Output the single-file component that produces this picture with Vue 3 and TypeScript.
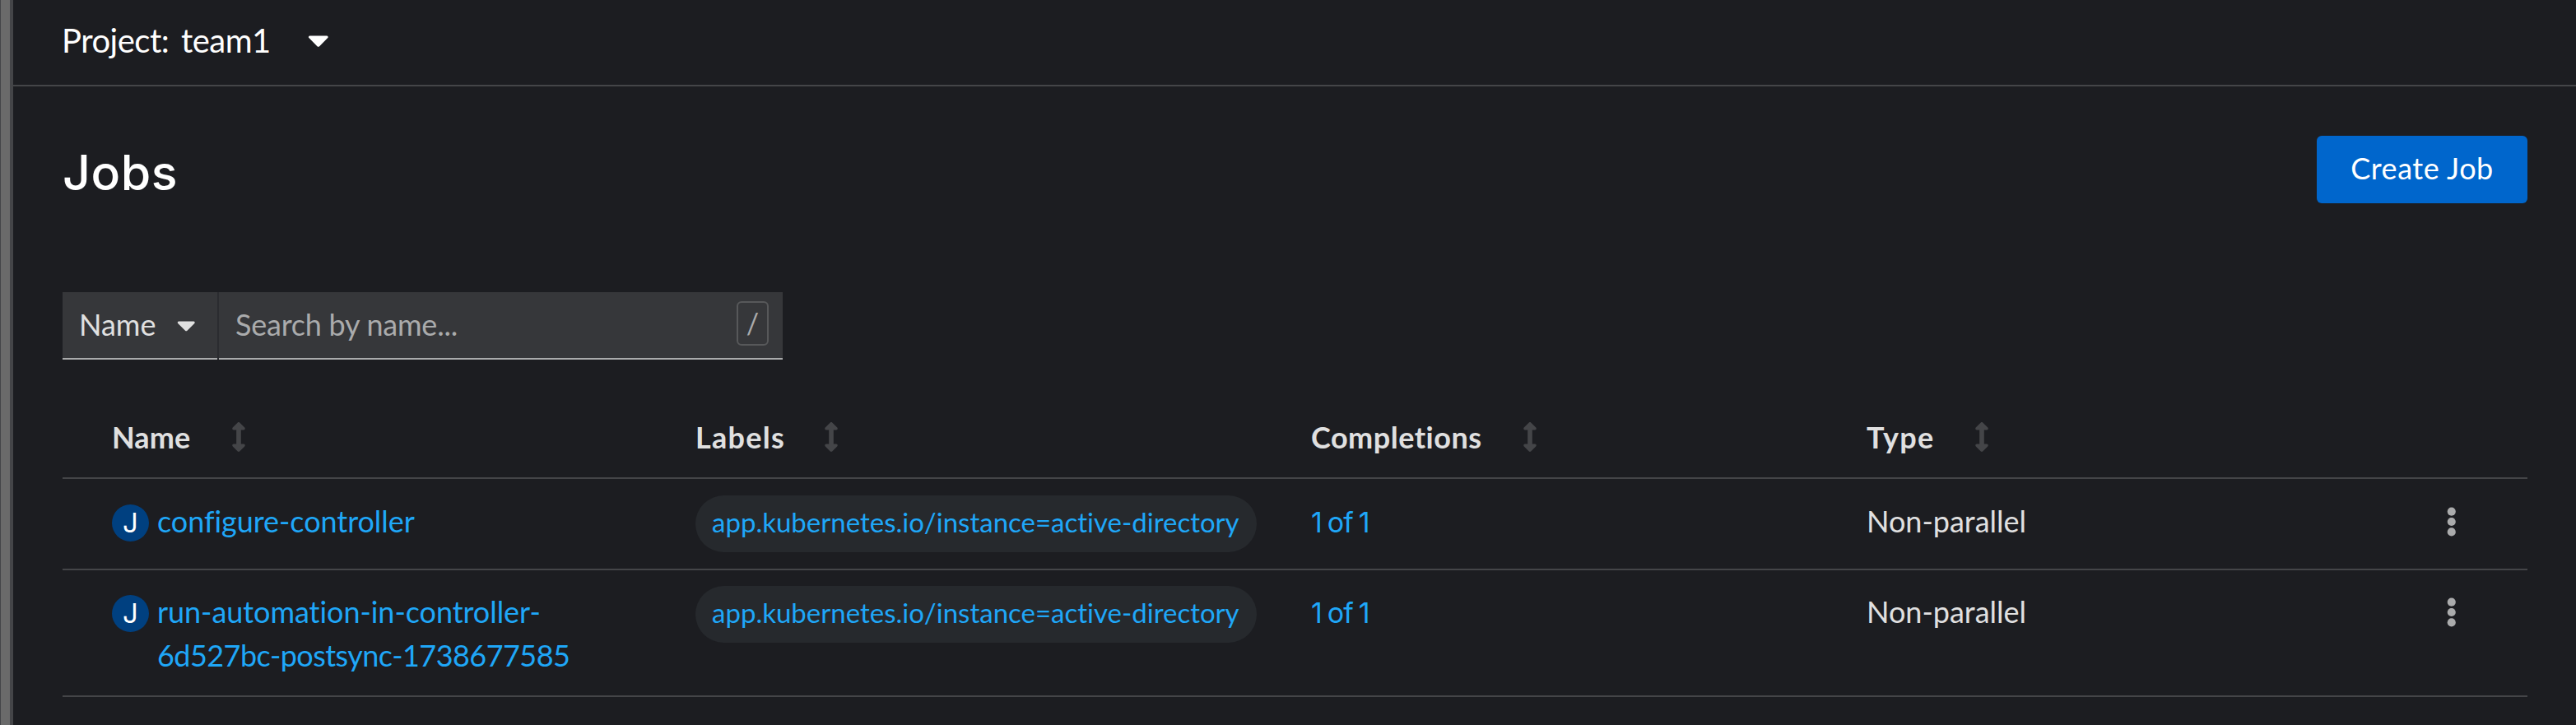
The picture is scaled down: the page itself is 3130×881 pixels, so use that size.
<script setup lang="ts">
interface Column {
  key: string
  label: string
}

interface Job {
  id: string
  nameLines: string[]
  label: string
  completions: string
  type: string
}

const columns: Column[] = [
  { key: 'name', label: 'Name' },
  { key: 'labels', label: 'Labels' },
  { key: 'completions', label: 'Completions' },
  { key: 'type', label: 'Type' },
]

const jobs: Job[] = [
  {
    id: 'configure',
    nameLines: ['configure-controller'],
    label: 'app.kubernetes.io/instance=active-directory',
    completions: '1 of 1',
    type: 'Non-parallel',
  },
  {
    id: 'postsync',
    nameLines: ['run-automation-in-controller-', '6d527bc-postsync-1738677585'],
    label: 'app.kubernetes.io/instance=active-directory',
    completions: '1 of 1',
    type: 'Non-parallel',
  },
]

const caretPath =
  'M31.3 192h257.3c17.8 0 26.7 21.5 14.1 34.1L174.1 354.7c-7.8 7.8-20.5 7.8-28.3 0L17.2 226.1C4.6 213.5 13.5 192 31.3 192z'
const sortPath =
  'M214.059 377.941H168V134.059h46.059c21.382 0 32.09-25.851 16.971-40.971L144.97 7.029c-9.373-9.373-24.568-9.373-33.941 0L24.971 93.088c-15.119 15.119-4.411 40.971 16.971 40.971H88v243.882H41.941c-21.382 0-32.09 25.851-16.971 40.971l86.059 86.059c9.373 9.373 24.568 9.373 33.941 0l86.059-86.059c15.12-15.119 4.412-40.97-16.97-40.97z'
</script>

<template>
  <div class="shell">
    <div class="gutter"></div>
    <main class="page">
      <div class="project-bar">
        <span class="project-name">Project: team1</span>
        <svg class="caret-lg" viewBox="0 0 320 512"><path :d="caretPath" /></svg>
      </div>

      <header class="heading">
        <h1>Jobs</h1>
        <button class="create" type="button">Create Job</button>
      </header>

      <div class="toolbar">
        <div class="filter">
          <span class="filter-name">Name</span>
          <svg class="caret-sm" viewBox="0 0 320 512"><path :d="caretPath" /></svg>
        </div>
        <div class="search">
          <span class="placeholder">Search by name...</span>
          <span class="key">/</span>
        </div>
      </div>

      <section class="table">
        <div class="row head">
          <div v-for="c in columns" :key="c.key" class="th" :class="c.key">
            <span class="th-label">{{ c.label }}</span>
            <svg class="sort" viewBox="0 0 256 512"><path :d="sortPath" /></svg>
          </div>
        </div>
        <div v-for="job in jobs" :key="job.id" class="row" :class="job.id">
          <div class="name-cell">
            <span class="badge">J</span>
            <a class="job-link">
              <span v-for="(line, i) in job.nameLines" :key="i" class="line">{{ line }}</span>
            </a>
          </div>
          <div><span class="chip">{{ job.label }}</span></div>
          <div class="done">{{ job.completions }}</div>
          <div class="kind">{{ job.type }}</div>
          <svg class="kebab" viewBox="0 0 192 512">
            <circle cx="96" cy="80" r="72" />
            <circle cx="96" cy="256" r="72" />
            <circle cx="96" cy="432" r="72" />
          </svg>
        </div>
      </section>
    </main>
  </div>
</template>

<style>
body {
  margin: 0;
  background: #1c1d21;
}
</style>

<style scoped>
.shell {
  display: flex;
  height: 881px;
  overflow: hidden;
  box-sizing: border-box;
  background: #1c1d21;
  color: #e0e0e0;
  font-family: Lato, 'Liberation Sans', sans-serif;
  font-size: 36px;
  line-height: 54px;
  font-variant-ligatures: none;
  white-space: nowrap;
}
.shell * {
  box-sizing: border-box;
}
svg {
  display: block;
  flex: none;
  fill: currentColor;
}
.gutter {
  flex: none;
  width: 16px;
  background: #6a6a6a;
  border-left: 1px solid #444548;
  border-right: 4px solid #444548;
}
.page {
  flex: 1;
  min-width: 0;
}
.project-bar {
  display: flex;
  height: 105px;
  padding: 19px 0 0 59px;
  border-bottom: 2px solid #444548;
  color: #fff;
}
.project-name {
  width: 299px;
  font-size: 40px;
  line-height: 60px;
  letter-spacing: -0.5px;
  word-spacing: 5px;
}
.caret-lg {
  width: 25.6px;
  height: 41px;
  margin-top: 9px;
}
.heading {
  display: flex;
  align-items: flex-start;
  justify-content: space-between;
  height: 250px;
  padding: 60px 59px 0 60px;
}
h1 {
  margin: 7px 0 0;
  color: #fff;
  font-family: Inter, sans-serif;
  font-size: 59px;
  font-weight: 500;
  line-height: 76px;
  letter-spacing: 0.6px;
}
.create {
  width: 256px;
  height: 82px;
  padding: 12px 0 16px;
  border: 0;
  border-radius: 6px;
  background: #0066cc;
  color: #fff;
  font: inherit;
  letter-spacing: 0.56px;
}
.toolbar {
  display: flex;
  gap: 2px;
  width: 875px;
  height: 82px;
  margin-left: 60px;
  background: #2b2c30;
}
.filter,
.search {
  display: flex;
  background: #36373a;
  border-bottom: 2px solid #aaabac;
  padding-top: 12px;
}
.filter {
  width: 188px;
  padding-left: 20px;
}
.filter-name {
  width: 119px;
}
.caret-sm {
  width: 22.5px;
  height: 36px;
  margin-top: 10px;
}
.search {
  flex: 1;
  justify-content: space-between;
  padding-left: 20px;
  padding-right: 17px;
  color: #aaabac;
}
.placeholder {
  letter-spacing: -0.23px;
}
.key {
  width: 39px;
  height: 54px;
  margin-top: -1px;
  border: 2px solid #57585a;
  border-radius: 6px;
  text-align: center;
  font-size: 34px;
  line-height: 50px;
}
.table {
  width: 2995px;
  margin: 47px 0 0 60px;
}
.row {
  display: grid;
  grid-template-columns: 769px 748px 675px 1fr 99px;
  align-items: start;
  border-bottom: 2px solid #444548;
  line-height: 53px;
}
.head {
  height: 98px;
  padding-top: 20px;
  line-height: 54px;
  font-weight: 700;
}
.th {
  display: flex;
}
.th-label {
  flex: none;
}
.sort {
  width: 18px;
  height: 36px;
  margin-top: 9px;
  color: #444548;
}
.th.name {
  padding-left: 60px;
}
.name .th-label {
  width: 145px;
  letter-spacing: 0.1px;
}
.labels .th-label {
  width: 156px;
  letter-spacing: 1.29px;
}
.completions .th-label {
  width: 257px;
  letter-spacing: 0.5px;
}
.type .th-label {
  width: 131px;
  letter-spacing: 1.33px;
}
.configure {
  height: 111px;
  padding-top: 25px;
}
.postsync {
  height: 154px;
  padding-top: 24px;
}
.name-cell {
  display: flex;
  padding-left: 60px;
}
.badge {
  width: 45px;
  height: 45px;
  margin-top: 6px;
  border-radius: 50%;
  background: #004080;
  color: #fff;
  text-align: center;
  font-family: Inter, sans-serif;
  font-size: 33px;
  line-height: 44px;
}
.job-link {
  margin-left: 10px;
  color: #1fa7f8;
}
.line {
  display: block;
  letter-spacing: -0.05px;
}
.line + .line {
  letter-spacing: -0.55px;
}
.chip {
  display: block;
  width: 682px;
  height: 69px;
  margin-top: -5px;
  padding-left: 20px;
  border-radius: 35px;
  background: #26292d;
  color: #1fa7f8;
  font-size: 33px;
  line-height: 64px;
}
.done {
  padding-top: 1px;
  color: #1fa7f8;
  font-family: Inter, sans-serif;
  font-size: 34px;
  letter-spacing: -1px;
  word-spacing: -1.6px;
}
.kind {
  letter-spacing: 0;
}
.kebab {
  width: 13.5px;
  height: 36px;
  margin-top: 8.5px;
  color: #aaabac;
}
</style>
